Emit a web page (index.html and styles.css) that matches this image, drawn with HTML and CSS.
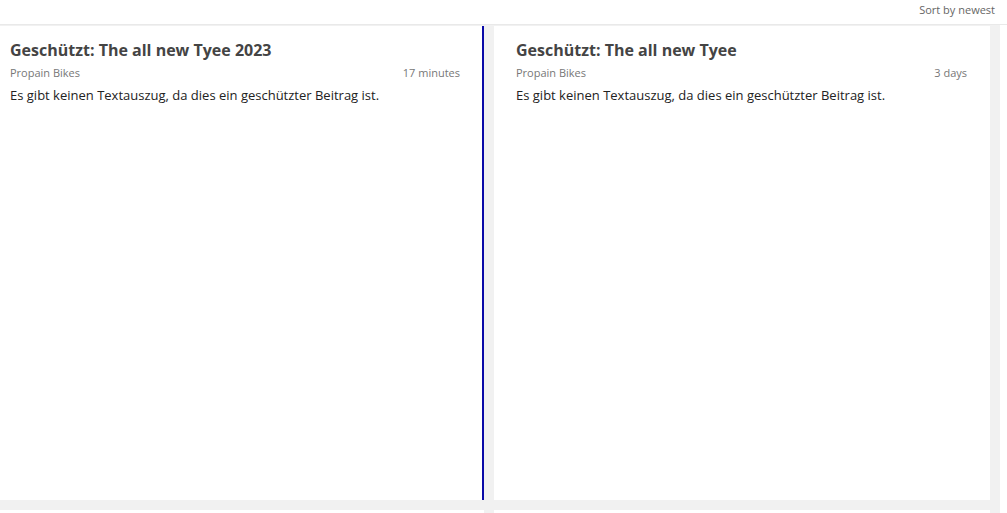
FILE: index.html
```html
<!DOCTYPE html>
<html lang="de">
<head>
    <meta charset="UTF-8">
    <title>Feed</title>
    <link rel="stylesheet" href="styles.css">
</head>
<body>
    <!-- Toolbar -->
    <div class="toolbar">
        <span class="sort">Sort by newest</span>
    </div>

    <!-- Posts -->
    <div class="feed">
        <div class="card selected">
            <h2 class="title">Geschützt: The all new Tyee 2023</h2>
            <div class="meta"><span>Propain Bikes</span><span>17 minutes</span></div>
            <p class="excerpt">Es gibt keinen Textauszug, da dies ein geschützter Beitrag ist.</p>
        </div>
        <div class="card">
            <h2 class="title">Geschützt: The all new Tyee</h2>
            <div class="meta"><span>Propain Bikes</span><span>3 days</span></div>
            <p class="excerpt">Es gibt keinen Textauszug, da dies ein geschützter Beitrag ist.</p>
        </div>
        <div class="card"></div>
        <div class="card"></div>
    </div>
</body>
</html>
```
FILE: styles.css
```css
/* Page */
body {
    margin: 0;
    font-family: 'Open Sans', 'Noto Sans', sans-serif;
    background: #fff;
    overflow: hidden;
}

/* Top bar */
.toolbar {
    height: 25px;
    border-bottom: 1px solid #e9e9e9;
    display: flex;
    justify-content: flex-end;
    align-items: flex-start;
    padding: 2px 12px 0 0;
    box-sizing: border-box;
}

.sort {
    font-size: 11px;
    color: #666;
}

/* Cards grid */
.feed {
    display: grid;
    grid-template-columns: 496px 496px;
    grid-auto-rows: 474px;
    gap: 10px;
    margin-left: -12px;
    padding: 1px 10px 0 0;
    width: 1012px;
    height: 488px;
    overflow: hidden;
    background: #f1f1f1;
    box-sizing: border-box;
}

.card {
    background: #fff;
    padding: 12px 23px 0 22px;
    box-sizing: border-box;
}

.card.selected {
    border-right: 2px solid #0a0aa8;
    padding-right: 22px;
}

.title {
    margin: 0;
    font-size: 16px;
    font-weight: 700;
    color: #444;
    line-height: 24px;
}

.meta {
    display: flex;
    justify-content: space-between;
    font-size: 11px;
    color: #777;
    margin-top: 3px;
}

.excerpt {
    margin: 6px 0 0;
    font-size: 13px;
    color: #222;
}
```
